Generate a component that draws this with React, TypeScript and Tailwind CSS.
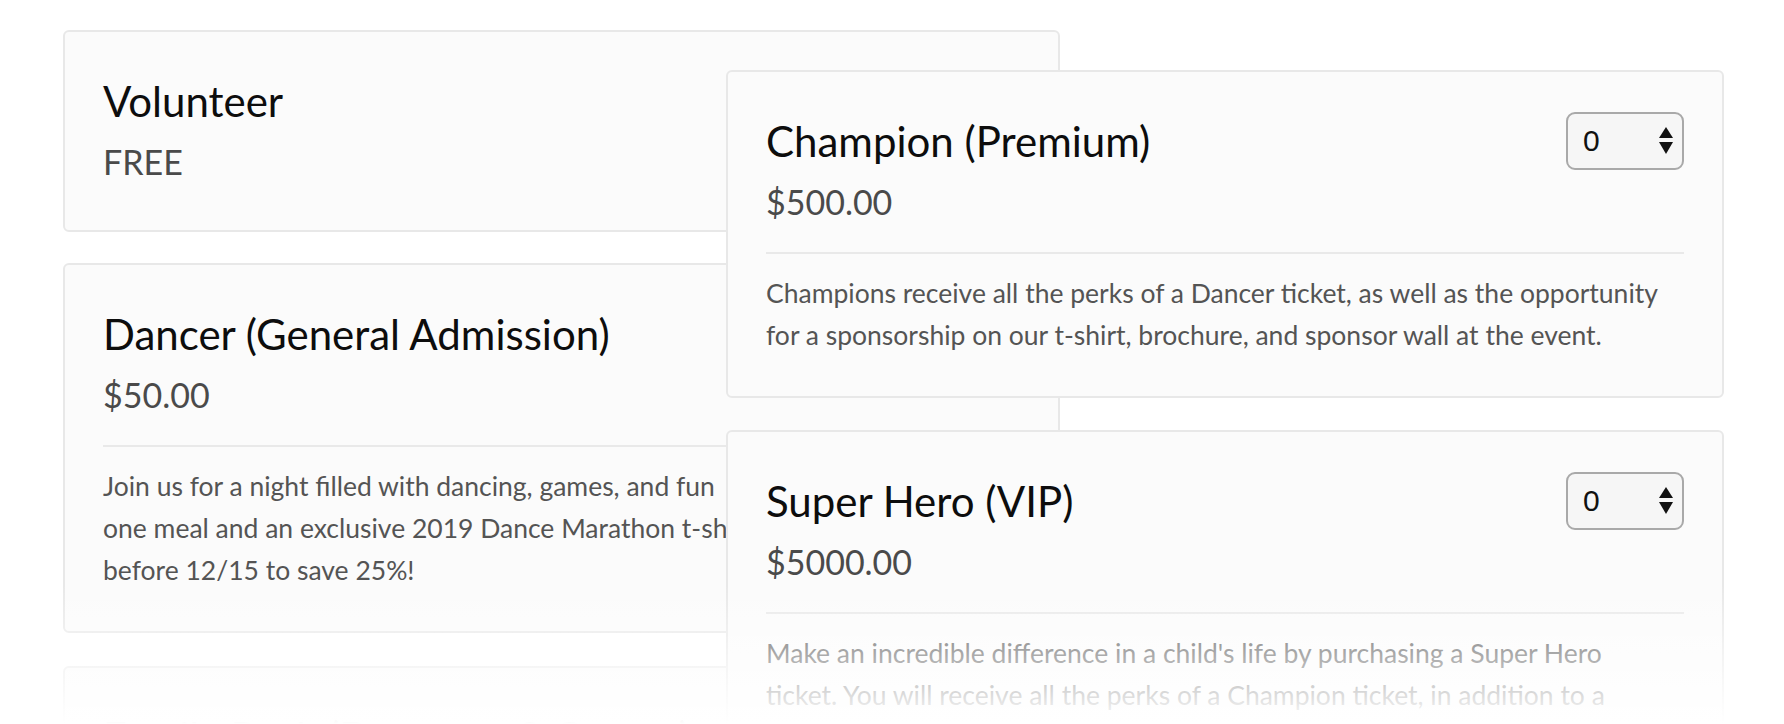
import React from "react";

type CardProps = {
  title: string;
  price: string;
  lines?: string[];
  select?: boolean;
  className?: string;
};

function QtySelect() {
  return (
    <div className="flex h-[58px] w-[118px] shrink-0 items-center justify-between rounded-[9px] border-2 border-[#a9a9a9] bg-[#f6f6f6] pl-[15px] pr-[8px]">
      <span className="font-['Liberation_Sans',sans-serif] text-[30px] leading-none text-[#111]">0</span>
      <svg width="16" height="28" viewBox="0 0 16 28" className="block">
        <path d="M8 0 L15 11 L1 11 Z" fill="#111" />
        <path d="M1 15 L15 15 L8 27 Z" fill="#111" />
      </svg>
    </div>
  );
}

function Card({ title, price, lines, select, className = "" }: CardProps) {
  return (
    <div
      className={`rounded-[6px] border-2 border-[#e8e8e8] bg-[#fbfbfb] px-[38px] pt-[40px] ${
        lines ? "pb-[40px]" : "pb-[48px]"
      } ${className}`}
    >
      <div className="flex items-start justify-between">
        <div>
          <div className="mt-[4px] whitespace-nowrap text-[42px] leading-[50px] text-[#0d0d0d]">{title}</div>
          <div className="mt-[16px] whitespace-nowrap text-[34px] leading-[40px] text-[#4a4a4a]">{price}</div>
        </div>
        {select && <QtySelect />}
      </div>
      {lines && (
        <>
          <div className="mt-[30px] h-[2px] bg-[#e9e9e9]" />
          <div className="mt-[18px] text-[26.5px] leading-[42px] text-[#545454]">
            {lines.map((l, i) => (
              <div key={i} className="whitespace-pre">
                {l}
              </div>
            ))}
          </div>
        </>
      )}
    </div>
  );
}

export default function App() {
  return (
    <div className="relative h-[724px] w-full overflow-hidden bg-white font-[Lato,sans-serif]">
      <div className="ml-[63px] flex w-[997px] flex-col pt-[30px]">
        <Card title="Volunteer" price="FREE" />
        <Card
          className="mt-[31px]"
          title="Dancer (General Admission)"
          price="$50.00"
          lines={[
            "Join us for a night filled with dancing, games, and fun      with friends. Tickets include",
            "one meal and an exclusive 2019 Dance Marathon t-shirt. Register early",
            "before 12/15 to save 25%!",
          ]}
        />
        <Card
          className="mt-[33px]"
          title="Family Pack (Dancer + 3 Guests)"
          price="$150.00"
          lines={["Bring the whole family along for a night of fun and fundraising."]}
        />
      </div>

      <div className="absolute left-[726px] top-[70px] flex w-[998px] flex-col">
        <Card
          select
          title="Champion (Premium)"
          price="$500.00"
          lines={[
            "Champions receive all the perks of a Dancer ticket, as well as the opportunity",
            "for a sponsorship on our t-shirt, brochure, and sponsor wall at the event.",
          ]}
        />
        <Card
          select
          className="mt-[32px]"
          title="Super Hero (VIP)"
          price="$5000.00"
          lines={[
            "Make an incredible difference in a child's life by purchasing a Super Hero",
            "ticket. You will receive all the perks of a Champion ticket, in addition to a",
            "personal tour of the hospital and a meet and greet with our miracle families.",
          ]}
        />
      </div>

      <div className="pointer-events-none absolute inset-x-0 bottom-0 h-[140px] bg-gradient-to-b from-white/0 to-white" />
    </div>
  );
}
